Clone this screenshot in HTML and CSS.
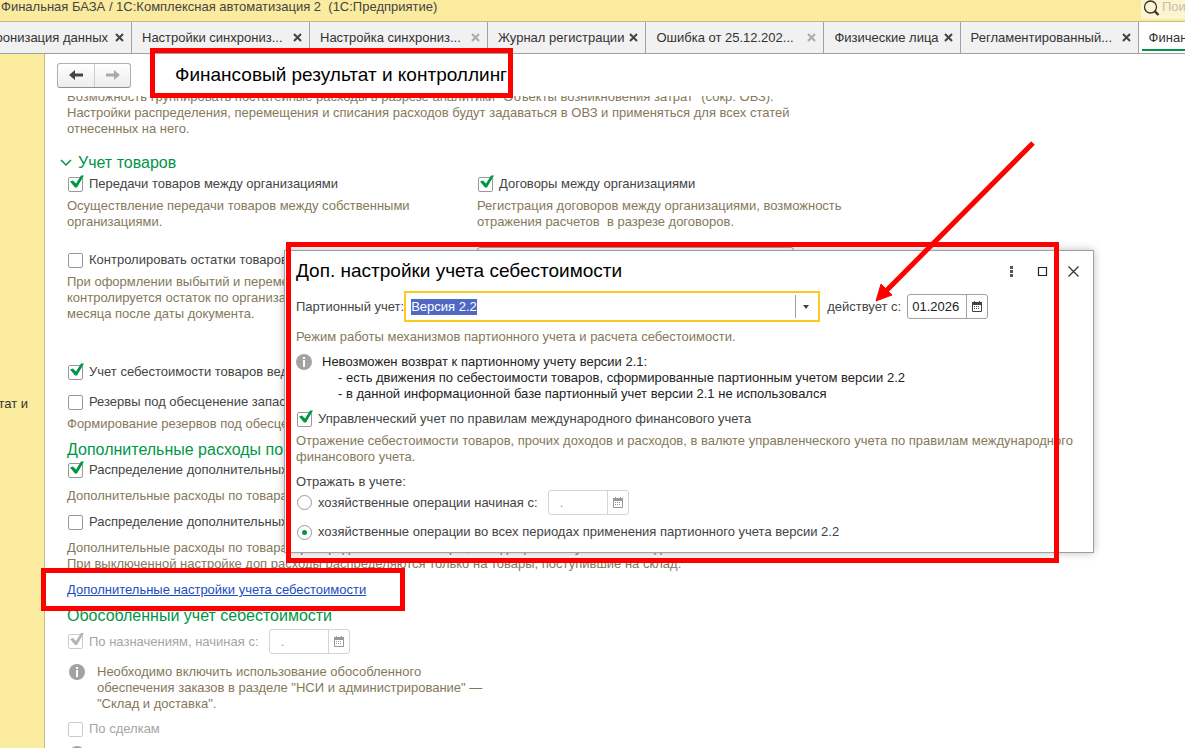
FILE: index.html
```html
<!DOCTYPE html>
<html lang="ru">
<head>
  <meta charset="UTF-8">
  <meta name="viewport" content="width=device-width, initial-scale=1.0">
  <title>Финансовый результат и контроллинг</title>
  <link rel="stylesheet" href="styles.css">
</head>
<body>

  <!-- Shared icons -->
  <svg class="sprite" aria-hidden="true">
    <symbol id="icon-close" viewBox="0 0 9 9">
      <path d="M1 1l7 7M8 1L1 8" fill="none" stroke="currentColor" stroke-width="2"/>
    </symbol>
    <symbol id="icon-calendar" viewBox="0 0 10 11">
      <path d="M.5 2h9v8.5h-9z" fill="none" stroke="currentColor"/>
      <path d="M0 1h10v3H0zM2 0h1v2H2zM7 0h1v2H7z" fill="currentColor"/>
      <path d="M2 5.5h6M2 7.5h6" fill="none" stroke="currentColor" stroke-dasharray="1 1"/>
    </symbol>
    <symbol id="icon-info" viewBox="0 0 16 16">
      <circle cx="8" cy="8" r="8" fill="#a3a3a3"/>
      <path d="M7 3h2v2H7zM7 6h2v7H7z" fill="#fff"/>
    </symbol>
  </svg>

  <header class="titlebar">
    <span class="titlebar-text">Финальная БАЗА / 1С:Комплексная автоматизация 2&nbsp; (1С:Предприятие)</span>
    <div class="search">
      <svg width="17" height="17" viewBox="0 0 17 17" aria-hidden="true">
        <circle cx="7.5" cy="7" r="6" fill="none" stroke="#333" stroke-width="1.3"/>
        <path d="M11.500 11l4 4" stroke="#333" stroke-width="2.400"/>
      </svg>
      <input type="search" placeholder="Поиск" aria-label="Поиск">
    </div>
  </header>

  <nav class="tabs">
    <div class="tab tab-first"><a href="#">Синхронизация данных</a><button aria-label="Закрыть"><svg><use href="#icon-close"/></svg></button></div>
    <div class="tab tab-wide"><a href="#">Настройки синхрониз...</a><button aria-label="Закрыть"><svg><use href="#icon-close"/></svg></button></div>
    <div class="tab tab-wide"><a href="#">Настройка синхрониз...</a><button class="muted" aria-label="Закрыть"><svg><use href="#icon-close"/></svg></button></div>
    <div class="tab"><a href="#">Журнал регистрации</a><button aria-label="Закрыть"><svg><use href="#icon-close"/></svg></button></div>
    <div class="tab tab-wide"><a href="#">Ошибка от 25.12.202...</a><button class="muted" aria-label="Закрыть"><svg><use href="#icon-close"/></svg></button></div>
    <div class="tab"><a href="#">Физические лица</a><button aria-label="Закрыть"><svg><use href="#icon-close"/></svg></button></div>
    <div class="tab tab-wide"><a href="#">Регламентированный...</a><button aria-label="Закрыть"><svg><use href="#icon-close"/></svg></button></div>
    <div class="tab active"><a href="#">Финансовый результат</a></div>
  </nav>

  <div class="workspace">
    <aside class="sidebar"><a href="#">Финансовый результат и</a></aside>

    <main class="page">
      <div class="page-head">
        <div class="nav-buttons">
          <button aria-label="Назад"><svg width="16" height="12" viewBox="0 0 16 12"><path d="M1 6l6-5v3.500h8v3H7V11z" fill="#444"/></svg></button>
          <button aria-label="Вперед"><svg width="16" height="12" viewBox="0 0 16 12"><path d="M15 6L9 1v3.500H1v3h8V11z" fill="#aaa"/></svg></button>
        </div>
        <h1>Финансовый результат и контроллинг</h1>
      </div>

      <div class="settings">
        <p class="hint hint-top">Возможность группировать постатейные расходы в разрезе аналитики "Объекты возникновения затрат" (сокр. ОВЗ).<br>Настройки распределения, перемещения и списания расходов будут задаваться в ОВЗ и применяться для всех статей<br>отнесенных на него.</p>

        <h2 class="goods"><svg width="12" height="8" viewBox="0 0 12 8" aria-hidden="true"><path d="M1 1l5 5 5-5" fill="none" stroke="#009646" stroke-width="1.500"/></svg>Учет товаров</h2>
        <div class="columns">
          <div>
            <label class="check"><input type="checkbox" checked>Передачи товаров между организациями</label>
            <p class="hint">Осуществление передачи товаров между собственными<br>организациями.</p>
            <label class="check gap-xl"><input type="checkbox">Контролировать остатки товаров организаций</label>
            <p class="hint">При оформлении выбытий и перемещений товаров<br>контролируется остаток по организациям на конец<br>месяца после даты документа.</p>
          </div>
          <div>
            <label class="check"><input type="checkbox" checked>Договоры между организациями</label>
            <p class="hint">Регистрация договоров между организациями, возможность<br>отражения расчетов&nbsp; в разрезе договоров.</p>
            <input class="control-field" type="text" aria-label="Контроль остатков">
          </div>
        </div>

        <label class="check gap-xxl"><input type="checkbox" checked>Учет себестоимости товаров ведется</label>
        <label class="check gap-l"><input type="checkbox">Резервы под обесценение запасов</label>
        <p class="hint">Формирование резервов под обесценение</p>

        <h2>Дополнительные расходы по товарам</h2>
        <label class="check"><input type="checkbox" checked>Распределение дополнительных расходов</label>
        <p class="hint gap-m">Дополнительные расходы по товарам</p>
        <label class="check gap-m"><input type="checkbox">Распределение дополнительных расходов</label>
        <p class="hint gap-m">Дополнительные расходы по товарам распределяются на товары, находящиеся в пути и на складе.<br>При выключенной настройке доп расходы распределяются только на товары, поступившие на склад.</p>
        <a class="link" href="#">Дополнительные настройки учета себестоимости</a>

        <h2>Обособленный учет себестоимости</h2>
        <div class="field-row">
          <label class="check disabled"><input type="checkbox" checked disabled>По назначениям, начиная с:</label>
          <div class="date disabled">
            <input type="text" value="  ." aria-label="Дата начала" disabled>
            <button aria-label="Календарь" disabled><svg><use href="#icon-calendar"/></svg></button>
          </div>
        </div>
        <div class="note gap-l">
          <svg><use href="#icon-info"/></svg>
          <p>Необходимо включить использование обособленного<br>обеспечения заказов в разделе "НСИ и администрирование" —<br>"Склад и доставка".</p>
        </div>
        <label class="check disabled gap-s"><input type="checkbox" disabled>По сделкам</label>
        <div class="note gap-s">
          <svg><use href="#icon-info"/></svg>
          <p>Необходимо включить использование сделок.</p>
        </div>
      </div>
    </main>
  </div>

  <section class="dialog" role="dialog" aria-labelledby="dialogTitle">
    <div class="dialog-head">
      <h2 id="dialogTitle">Доп. настройки учета себестоимости</h2>
      <div class="dialog-buttons">
        <button aria-label="Меню"><svg width="11" height="11" viewBox="0 0 11 11"><path d="M4 0h3v3H4zM4 4h3v3H4zM4 8h3v3H4z" fill="#555"/></svg></button>
        <button aria-label="Развернуть"><svg width="11" height="11" viewBox="0 0 11 11"><path d="M1.500 1.500h8v8h-8z" fill="none" stroke="#222" stroke-width="1.200"/></svg></button>
        <button aria-label="Закрыть"><svg width="11" height="11" viewBox="0 0 11 11"><path d="M.5.5l10 10M10.500.5l-10 10" stroke="#333" stroke-width="1.200"/></svg></button>
      </div>
    </div>

    <div class="batch-row">
      <label for="batch">Партионный учет:</label>
      <div class="combo">
        <input type="text" id="batch" value="Версия 2.2" autofocus>
        <button aria-label="Выбрать"><svg width="6" height="4" viewBox="0 0 6 4"><path d="M0 0h6L3 4z" fill="#444"/></svg></button>
      </div>
      <label class="from-label" for="from">действует с:</label>
      <div class="date">
        <input type="text" id="from" value="01.2026">
        <button aria-label="Календарь"><svg><use href="#icon-calendar"/></svg></button>
      </div>
    </div>
    <p class="hint gap-s">Режим работы механизмов партионного учета и расчета себестоимости.</p>

    <div class="note note-dark">
      <svg><use href="#icon-info"/></svg>
      <div>
        <p>Невозможен возврат к партионному учету версии 2.1:</p>
        <ul>
          <li>- есть движения по себестоимости товаров, сформированные партионным учетом версии 2.2</li>
          <li>- в данной информационной базе партионный учет версии 2.1 не использовался</li>
        </ul>
      </div>
    </div>

    <label class="check gap-s"><input type="checkbox" checked>Управленческий учет по правилам международного финансового учета</label>
    <p class="hint">Отражение себестоимости товаров, прочих доходов и расходов, в валюте управленческого учета по правилам международного<br>финансового учета.</p>

    <p class="group-label">Отражать в учете:</p>
    <div class="field-row">
      <label class="check"><input type="radio" name="period">хозяйственные операции начиная с:</label>
      <div class="date disabled">
        <input type="text" value="  ." aria-label="Начиная с" disabled>
        <button aria-label="Календарь" disabled><svg><use href="#icon-calendar"/></svg></button>
      </div>
    </div>
    <label class="check gap-s"><input type="radio" name="period" checked>хозяйственные операции во всех периодах применения партионного учета версии 2.2</label>
  </section>

  <!-- Red marks over the form -->
  <svg class="marks" aria-hidden="true">
    <g fill="none" stroke="#f00" stroke-width="5">
      <rect x="152.500" y="50.500" width="358" height="45"/>
      <rect x="288.500" y="244.500" width="768" height="316"/>
      <rect x="43.500" y="570.500" width="359" height="38"/>
      <path d="M1033 143L886 291"/>
    </g>
    <path d="M876 301l5-17 11 11z" fill="#f00" stroke="#f00"/>
  </svg>

  <script>
    document.getElementById("batch").focus();
    document.getElementById("batch").select();
  </script>
</body>
</html>
```
FILE: styles.css
```css
* {
  margin: 0;
  padding: 0;
  box-sizing: border-box;
}

body {
  position: relative;
  display: flex;
  flex-direction: column;
  height: 100vh;
  overflow: hidden;
  background: #fff;
  color: #444;
  font-family: "Liberation Sans", Arial, sans-serif;
  font-size: 13px;
  line-height: 16px;
}

input,
button {
  font: inherit;
  color: inherit;
  border: none;
  background: none;
  outline: none;
}

a {
  color: inherit;
  text-decoration: none;
}

.sprite {
  display: none;
}

/* Title bar */
.titlebar {
  flex: none;
  display: flex;
  justify-content: space-between;
  height: 22px;
  padding-left: 1px;
  background: #fbeb9e;
  border-bottom: 1px solid #c6ba7c;
  overflow: hidden;
}

.titlebar-text {
  line-height: 14px;
  white-space: pre;
}

.search {
  display: flex;
  gap: 2px;
  width: 44px;
  height: 19px;
  padding-left: 2px;
  background: #fdf5cf;
  overflow: hidden;
}

.search svg {
  flex: none;
}

.search input {
  width: 80px;
  height: 14px;
  flex: none;
}

.search input::placeholder {
  color: #c4c0ae;
}

/* Tabs */
.tabs {
  flex: none;
  display: flex;
  height: 32px;
  background: #f1f1f1;
  border-bottom: 1px solid #a0a0a0;
  overflow: hidden;
}

.tab {
  flex: none;
  display: flex;
  align-items: center;
  justify-content: space-between;
  gap: 5px;
  padding: 0 7px 0 10px;
  border-right: 1px solid #a0a0a0;
  color: #333;
  white-space: nowrap;
}

.tab-first {
  width: 132px;
  gap: 7px;
  justify-content: flex-end;
}

.tab-wide {
  width: 178px;
}

.tab.active {
  width: 178px;
  background: linear-gradient(#009646, #009646) 3px 27px / 100% 2px no-repeat #fff;
}

.tab button {
  display: flex;
  color: #444;
}

.tab button.muted {
  color: #aaa;
}

.tab svg {
  width: 9px;
  height: 9px;
}

/* Workspace */
.workspace {
  flex: 1;
  display: flex;
  min-height: 0;
}

.sidebar {
  flex: none;
  display: flex;
  justify-content: flex-end;
  width: 45px;
  padding: 342px 16px 0 0;
  background: #fbeb9e;
  border-right: 1px solid #c6ba7c;
  color: #333;
  white-space: nowrap;
  overflow: hidden;
}

.page {
  flex: 1;
  display: flex;
  flex-direction: column;
  min-width: 0;
}

.page-head {
  flex: none;
  display: flex;
  align-items: center;
  gap: 44px;
  height: 42px;
  padding-left: 12px;
}

.page-head h1 {
  color: #000;
  font-size: 19px;
  font-weight: normal;
  line-height: 20px;
}

.nav-buttons {
  display: flex;
  height: 25px;
  border: 1px solid #b0b0b0;
  border-bottom-color: #909090;
  border-radius: 3px;
  background: linear-gradient(#fff, #ededed);
}

.nav-buttons button {
  display: flex;
  align-items: center;
  justify-content: center;
  width: 36px;
}

.nav-buttons button + button {
  border-left: 1px solid #ccc;
}

.settings {
  flex: 1;
  min-height: 0;
  padding-left: 22px;
  overflow: hidden;
  white-space: nowrap;
}

.settings h2 {
  margin-top: 8px;
  color: #009646;
  font-size: 16px;
  font-weight: normal;
  line-height: 20px;
}

.settings .goods {
  display: flex;
  align-items: center;
  gap: 6px;
  margin: 16px 0 1px -7px;
}

.columns {
  display: grid;
  grid-template-columns: 410px 1fr;
}

.hint {
  margin-top: 4px;
  color: #84795a;
}

.hint.hint-top {
  margin-top: -7px;
}

.gap-s,
.hint.gap-s {
  margin-top: 7px;
}

.gap-m,
.hint.gap-m {
  margin-top: 8px;
}

.gap-l {
  margin-top: 10px;
}

.gap-xl {
  margin-top: 20px;
}

.gap-xxl {
  margin-top: 40px;
}

/* Tick boxes and radio buttons */
.check {
  display: flex;
  align-items: center;
  gap: 6px;
  height: 20px;
  padding-left: 1px;
}

.check input {
  flex: none;
  position: relative;
  appearance: none;
  width: 15px;
  height: 15px;
  background: #fff;
  border: 1px solid #999;
  border-radius: 2px;
}

.check input[type="checkbox"]:checked::before {
  content: "";
  position: absolute;
  top: -3px;
  left: 1px;
  width: 14px;
  height: 14px;
  background: #009646;
  clip-path: polygon(0 7px, 3px 6px, 6px 9px, 11px 1px, 14px 1px, 7px 13px, 5px 13px);
}

.check input[type="radio"] {
  border-radius: 50%;
}

.check input[type="radio"]:checked::before {
  content: "";
  position: absolute;
  top: 4px;
  left: 4px;
  width: 5px;
  height: 5px;
  border-radius: 50%;
  background: #009646;
}

.check.disabled {
  color: #a5a5a5;
}

.check.disabled input {
  border-color: #ccc;
}

.check.disabled input:checked::before {
  background: #b4b4b4;
}

.control-field {
  display: block;
  width: 317px;
  height: 25px;
  margin-top: 17px;
  border: 1px solid #a0a0a0;
  border-radius: 3px;
}

.link {
  display: block;
  width: max-content;
  margin-top: 10px;
  color: #1a4dbf;
  text-decoration: underline;
}

.field-row {
  display: flex;
  align-items: center;
  gap: 10px;
}

.settings .field-row {
  margin-top: 3px;
}

.date {
  display: flex;
  width: 81px;
  height: 25px;
  border: 1px solid #a0a0a0;
  border-radius: 3px;
  background: #fff;
}

.date input {
  flex: 1;
  min-width: 0;
  padding-left: 4px;
  color: #222;
  white-space: pre;
}

.date button {
  display: flex;
  align-items: center;
  justify-content: center;
  width: 21px;
  border-left: 1px solid #a0a0a0;
}

.date svg {
  width: 10px;
  height: 11px;
}

.date.disabled,
.date.disabled button {
  border-color: #d4d4d4;
}

.date.disabled input,
.date.disabled button {
  color: #999;
}

.note {
  display: flex;
  gap: 12px;
  padding-left: 2px;
  color: #84795a;
}

.note svg {
  flex: none;
  width: 16px;
  height: 16px;
}

.note ul {
  padding-left: 16px;
  list-style: none;
}

.note-dark {
  gap: 10px;
  margin-top: 9px;
  padding-left: 0;
  color: #222;
}

/* Dialog */
.dialog {
  position: absolute;
  top: 250px;
  left: 284px;
  width: 810px;
  padding: 0 11px 10px;
  background: #fff;
  border: 1px solid #a0a0a0;
  box-shadow: 0 0 8px rgba(0, 0, 0, 0.25);
  white-space: nowrap;
}

.dialog-head {
  display: flex;
  align-items: center;
  justify-content: space-between;
  height: 40px;
}

.dialog-head h2 {
  color: #000;
  font-size: 19px;
  font-weight: normal;
  line-height: 20px;
}

.dialog-buttons {
  display: flex;
  gap: 20px;
  padding-right: 3px;
}

.dialog-buttons button {
  display: flex;
}

.batch-row {
  display: flex;
  align-items: center;
}

.combo {
  display: flex;
  align-items: center;
  width: 416px;
  height: 31px;
  border: 2px solid #fcc91f;
}

.combo input {
  flex: 1;
  min-width: 0;
  padding-left: 5px;
}

.combo input::selection {
  background: #5068c4;
  color: #fff;
}

.combo button {
  display: flex;
  align-items: center;
  justify-content: center;
  width: 23px;
  height: 23px;
  padding-right: 3px;
  border-left: 1px solid #a0a0a0;
}

.from-label {
  margin: 0 6px 0 7px;
}

.group-label {
  margin-top: 9px;
}

/* Marks */
.marks {
  position: absolute;
  top: 0;
  left: 0;
  width: 100%;
  height: 100%;
  pointer-events: none;
}
```
